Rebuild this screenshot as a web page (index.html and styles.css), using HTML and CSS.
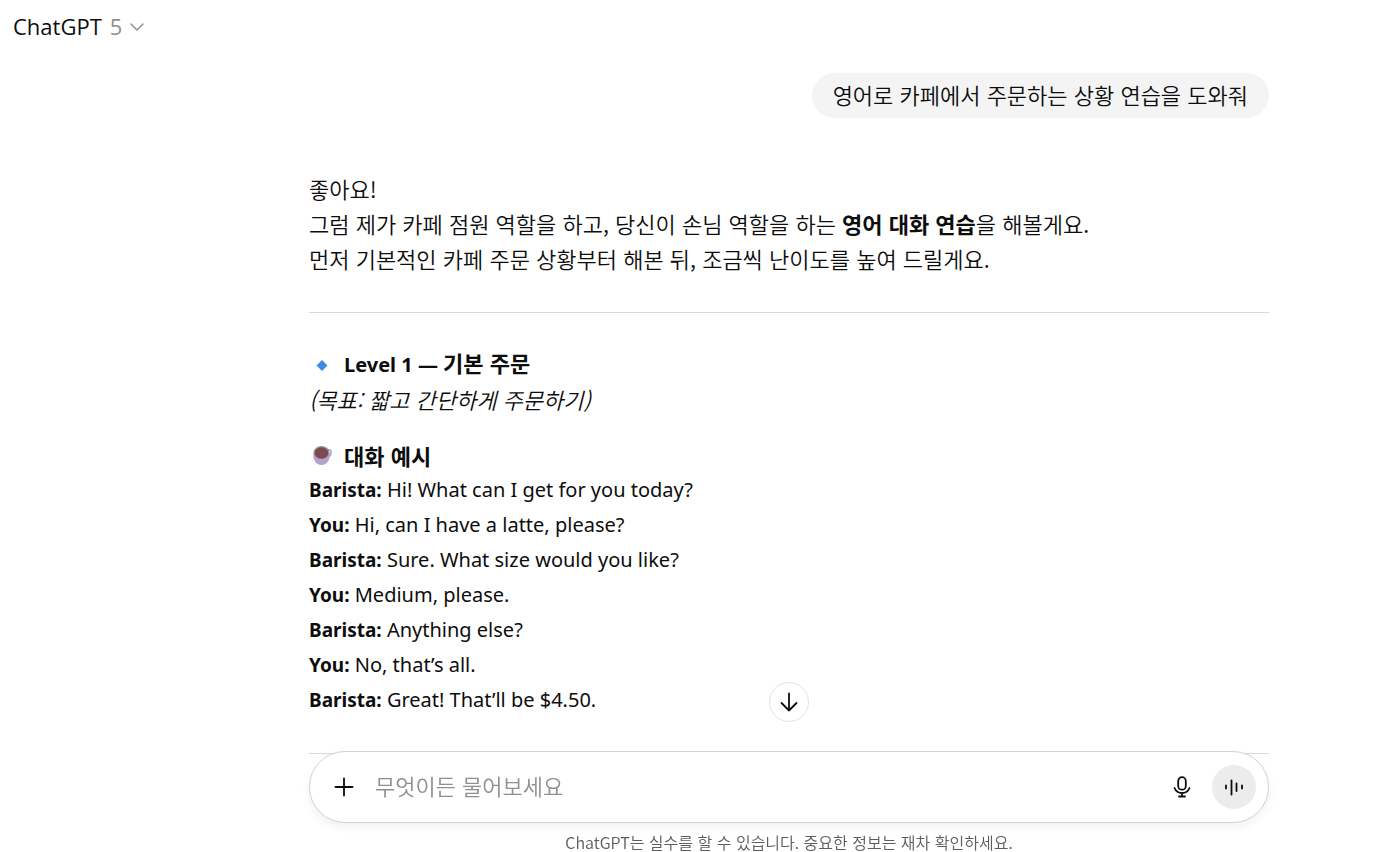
FILE: index.html
```html
<!DOCTYPE html>
<html lang="ko">

<head>
    <meta charset="UTF-8">
    <meta name="viewport" content="width=device-width, initial-scale=1.0">
    <title>ChatGPT</title>
    <link rel="stylesheet" href="styles.css">
</head>

<body>
    <header class="topbar">
        <button class="model" type="button">
            <span>ChatGPT</span>
            <span class="version">5</span>
            <svg class="chevron" viewBox="0 0 14 8" aria-hidden="true"><path d="M1 1l6 6 6-6" /></svg>
        </button>
    </header>

    <main class="thread">
        <div class="question">
            <p class="bubble">영어로 카페에서 주문하는 상황 연습을 도와줘</p>
        </div>

        <article class="answer">
            <p class="korean">좋아요!<br>
                그럼 제가 카페 점원 역할을 하고, 당신이 손님 역할을 하는 <strong>영어 대화 연습</strong>을 해볼게요.<br>
                먼저 기본적인 카페 주문 상황부터 해본 뒤, 조금씩 난이도를 높여 드릴게요.</p>
            <hr>
            <h2 class="heading">
                <svg class="emoji" viewBox="0 0 26 26" aria-hidden="true">
                    <path d="M13 8l5.500 5.500L13 19l-5.500-5.500z" fill="#3f8ae2" />
                </svg>
                <span>Level 1 — <span class="korean">기본 주문</span></span>
            </h2>
            <p class="korean"><em>(목표: 짧고 간단하게 주문하기)</em></p>
            <h3 class="heading">
                <svg class="emoji" viewBox="0 0 26 26" aria-hidden="true">
                    <path d="M19 8c4.500-1.500 4 5.500-.5 7.500" fill="none" stroke="#a99abd" stroke-width="1.500" />
                    <path d="M4.500 11c-1 6 2 12 8 12s9-6 8-12z" fill="#b5a3cf" />
                    <ellipse cx="12.500" cy="10.500" rx="8" ry="6.500" fill="#9c8ba8" />
                    <ellipse cx="12.500" cy="11" rx="6.800" ry="5.800" fill="#7b4b50" />
                </svg>
                <span class="korean">대화 예시</span>
            </h3>
            <p class="dialogue"><strong>Barista:</strong> Hi! What can I get for you today?<br>
                <strong>You:</strong> Hi, can I have a latte, please?<br>
                <strong>Barista:</strong> Sure. What size would you like?<br>
                <strong>You:</strong> Medium, please.<br>
                <strong>Barista:</strong> Anything else?<br>
                <strong>You:</strong> No, that’s all.<br>
                <strong>Barista:</strong> Great! That’ll be $4.50.</p>
            <hr>
        </article>
    </main>

    <footer class="dock">
        <button class="scroll-down" type="button" aria-label="아래로 스크롤">
            <svg viewBox="0 0 20 20" aria-hidden="true"><path d="M10 1.500v17M2.500 11l7.500 7.500 7.500-7.500" /></svg>
        </button>
        <form class="composer">
            <button class="tool" type="button" aria-label="파일 추가">
                <svg viewBox="0 0 20 20" aria-hidden="true"><path d="M10 1.500v17M1.500 10h17" /></svg>
            </button>
            <input class="korean" type="text" placeholder="무엇이든 물어보세요" aria-label="메시지">
            <button class="tool" type="button" aria-label="받아쓰기">
                <svg class="mic" viewBox="0 0 18 22" aria-hidden="true">
                    <rect x="5.200" y="1.200" width="7.600" height="12.500" rx="3.800" />
                    <path d="M1.500 12c1.200 3 4 5 7.500 5s6.300-2 7.500-5M9 17v3.500M6 20.500h6" />
                </svg>
            </button>
            <button class="voice" type="button" aria-label="음성 모드">
                <svg viewBox="0 0 20 20" aria-hidden="true"><path d="M2 8.500v3M7.500 3.500v14M12.500 6.500v7.500M18 8.500v3" /></svg>
            </button>
        </form>
        <p class="notice">ChatGPT는 실수를 할 수 있습니다. 중요한 정보는 재차 확인하세요.</p>
    </footer>
</body>

</html>
```
FILE: styles.css
```css
* {
    margin: 0;
    padding: 0;
    box-sizing: border-box;
}

body {
    background: #fff;
    color: #0d0d0d;
    font-family: "Noto Sans", "Noto Sans CJK KR", sans-serif;
    font-size: 20px;
    line-height: 35px;
    overflow: hidden;
}

button {
    border: none;
    background: none;
    color: inherit;
    font: inherit;
    cursor: pointer;
}

svg {
    fill: none;
    stroke: currentColor;
    stroke-width: 1.8;
    stroke-linecap: round;
    stroke-linejoin: round;
}

.topbar {
    padding: 9px 13px;
}

.model {
    display: flex;
    align-items: center;
    gap: 8px;
    font-family: "Open Sans", sans-serif;
    font-size: 22px;
}

.version {
    color: #8f8f8f;
}

.chevron {
    width: 14px;
    height: 8px;
    color: #8f8f8f;
    stroke-width: 1.5;
}

.thread,
.dock {
    width: calc(100% - 228px);
    max-width: 960px;
    margin: 0 114px 0 auto;
}

.korean,
.bubble {
    font-family: "Noto Sans CJK KR", sans-serif;
    font-size: 22px;
    font-weight: 350;
}

.question {
    display: flex;
    justify-content: flex-end;
    padding-top: 20px;
}

.bubble {
    background: #f4f4f4;
    border-radius: 23px;
    padding: 4px 21px 6px;
}

.answer {
    padding-top: 53px;
}

.answer hr {
    border: none;
    border-top: 1px solid #d9d9d9;
    margin: 36px 0 34px;
}

.heading {
    display: flex;
    align-items: center;
    gap: 9px;
    height: 35px;
    font-size: 20px;
    font-weight: 700;
}

h3.heading {
    margin-top: 20px;
}

.heading .korean {
    font-weight: 700;
    line-height: 24px;
}

.korean strong {
    font-weight: 700;
}

.dialogue strong {
    font-size: 19px;
    line-height: 24px;
}

.emoji {
    width: 26px;
    height: 26px;
    stroke: none;
}

.dock {
    position: fixed;
    right: 0;
    bottom: 0;
    display: flex;
    flex-direction: column;
    align-items: center;
}

.scroll-down {
    display: grid;
    place-items: center;
    width: 40px;
    height: 40px;
    margin-bottom: 29px;
    border: 1px solid #e2e2e2;
    border-radius: 50%;
    background: #fff;
}

.scroll-down svg,
.tool svg,
.voice svg {
    width: 20px;
    height: 20px;
}

.composer {
    display: flex;
    align-items: center;
    width: 100%;
    height: 72px;
    padding: 0 12px;
    border: 1px solid #d2d2d2;
    border-radius: 36px;
    background: #fff;
    box-shadow: 0 4px 10px rgba(0, 0, 0, 0.06);
}

.composer input {
    flex: 1;
    min-width: 0;
    height: 40px;
    margin: 0 9px;
    padding-bottom: 4px;
    border: none;
    outline: none;
    background: none;
}

.composer input::placeholder {
    color: #8f8f8f;
}

.tool,
.voice {
    display: grid;
    place-items: center;
    width: 44px;
    height: 44px;
}

.tool .mic {
    width: 18px;
    height: 22px;
}

.voice {
    margin-left: 8px;
    border-radius: 50%;
    background: #ececec;
}

.notice {
    color: #5d5d5d;
    font-family: "Noto Sans CJK KR", sans-serif;
    font-size: 16px;
    font-weight: 350;
    line-height: 20px;
    padding-top: 9px;
}
```
